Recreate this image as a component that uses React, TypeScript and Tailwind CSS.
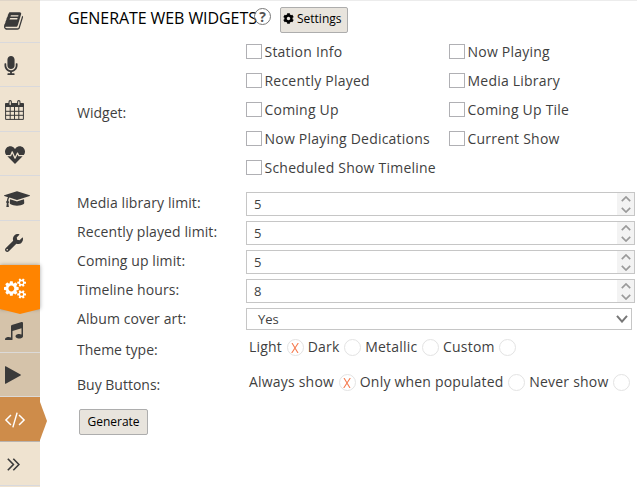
import React, { useState } from 'react';
import { FaMicrophone, FaHeartbeat, FaWrench, FaCog } from 'react-icons/fa';

interface IconProps {
  className?: string;
}

const BookIcon: React.FC<IconProps> = ({ className }) => (
  <svg viewBox="0 128 1664 1536" className={className} fill="currentColor">
    <path d="M1639 478q40 57 18 129l-275 906q-19 64-76.5 107.5t-122.5 43.5h-923q-77 0-148.5-53.5t-99.5-131.5q-24-67-2-127 0-4 3-27t4-37q1-8-3-21.5t-3-19.5q2-11 8-21t16.5-23.5 16.5-23.5q23-38 45-91.5t30-91.5q3-10 .5-30t-.5-28q3-11 17-28t17-23q21-36 42-92t25-90q1-9-2.5-32t.5-28q4-13 22-30.5t22-22.5q19-26 42.5-84.5t27.5-96.5q1-8-3-25.5t-2-26.5q2-8 9-18t18-23 17-21q8-12 16.5-30.5t15-35 16-36 19.5-32 26.5-23.5 36-11.5 47.5 5.5l-1 3q38-9 51-9h761q74 0 114 56t18 130l-274 906q-36 119-71.5 153.5t-128.5 34.5h-869q-27 0-38 15-11 16-1 43 24 70 144 70h923q29 0 56-15.5t35-41.5l300-987q7-22 5-57 38 15 59 43zm-1064 2q-4 13 2 22.5t20 9.5h608q13 0 25.5-9.5t16.5-22.5l21-64q4-13-2-22.5t-20-9.5h-608q-13 0-25.5 9.5t-16.5 22.5zm-83 256q-4 13 2 22.5t20 9.5h608q13 0 25.5-9.5t16.5-22.5l21-64q4-13-2-22.5t-20-9.5h-608q-13 0-25.5 9.5t-16.5 22.5z" />
  </svg>
);

const CalendarIcon: React.FC<IconProps> = ({ className }) => (
  <svg viewBox="0 0 19 20" className={className} fill="none" stroke="currentColor">
    <path d="M.5 3.5h18v3H.5z" fill="currentColor" />
    <path d="M.6 4v15.4h17.8V4M5.2 7v12.5M9.5 7v12.5M13.8 7v12.5M.5 11.3h18M.5 15.3h18" strokeWidth="1" />
    <path d="M5.2 1.8v2.8M13.8 1.8v2.8" stroke="#3a3a3a" strokeWidth="3.4" strokeLinecap="round" />
    <path d="M5.2 1.8v2.8M13.8 1.8v2.8" stroke="#efe3d0" strokeWidth="1.3" strokeLinecap="round" />
  </svg>
);

const CapIcon: React.FC<IconProps> = ({ className }) => (
  <svg viewBox="0 128 2304 1280" className={className} fill="currentColor">
    <path d="M1774 836l18 316q4 69-82 128t-235 93.5-323 34.5-323-34.5-235-93.5-82-128l18-316 574 181q22 7 48 7t48-7zm530-324q0 23-22 31l-1120 352q-4 1-10 1t-10-1l-652-206q-43 34-71 111.5t-34 178.5q63 36 63 109 0 69-58 107l58 433q2 14-8 25-9 11-24 11h-192q-15 0-24-11-10-11-8-25l58-433q-58-38-58-107 0-73 65-111 11-207 98-330l-333-104q-22-8-22-31t22-31l1120-352q4-1 10-1t10 1l1120 352q22 8 22 31z" />
  </svg>
);

const CogsIcon: React.FC<IconProps> = ({ className }) => (
  <svg viewBox="0 0 1920 1792" className={className} fill="currentColor">
    <path d="M896 896q0-106-75-181t-181-75-181 75-75 181 75 181 181 75 181-75 75-181zm768 512q0-52-38-90t-90-38-90 38-38 90q0 53 37.5 90.5t90.5 37.5 90.5-37.5 37.5-90.5zm0-1024q0-52-38-90t-90-38-90 38-38 90q0 53 37.5 90.5t90.5 37.5 90.5-37.5 37.5-90.5zm-384 421v185q0 10-7 19.5t-16 10.5l-155 24q-11 35-32 76 34 48 90 115 7 11 7 20 0 12-7 19-23 30-82.5 89.5t-78.5 59.5q-11 0-21-7l-115-90q-37 19-77 31-11 108-23 155-7 24-30 24h-186q-11 0-20-7.5t-10-17.5l-23-153q-34-10-75-31l-118 89q-7 7-20 7-11 0-21-8-144-133-144-160 0-9 7-19 10-14 41-53t47-61q-23-44-35-82l-152-24q-10-1-17-9.5t-7-19.5v-185q0-10 7-19.5t16-10.5l155-24q11-35 32-76-34-48-90-115-7-11-7-20 0-12 7-20 22-30 82-89t79-59q11 0 21 7l115 90q34-18 77-32 11-108 23-154 7-24 30-24h186q11 0 20 7.5t10 17.5l23 153q34 10 75 31l118-89q8-7 20-7 11 0 21 8 144 133 144 160 0 8-7 19-12 16-42 54t-45 60q23 48 34 82l152 23q10 2 17 10.5t7 19.5zm640 533v140q0 16-149 31-12 27-30 52 51 113 51 138 0 4-4 7-122 71-124 71-8 0-46-47t-52-68q-20 2-30 2t-30-2q-14 21-52 68t-46 47q-2 0-124-71-4-3-4-7 0-25 51-138-18-25-30-52-149-15-149-31v-140q0-16 149-31 13-29 30-52-51-113-51-138 0-4 4-7 4-2 35-20t59-34 30-16q8 0 46 46.5t52 67.5q20-2 30-2t30 2q51-71 92-112l6-2q4 0 124 70 4 3 4 7 0 25-51 138 17 23 30 52 149 15 149 31zm0-1024v140q0 16-149 31-12 27-30 52 51 113 51 138 0 4-4 7-122 71-124 71-8 0-46-47t-52-68q-20 2-30 2t-30-2q-14 21-52 68t-46 47q-2 0-124-71-4-3-4-7 0-25 51-138-18-25-30-52-149-15-149-31v-140q0-16 149-31 13-29 30-52-51-113-51-138 0-4 4-7 4-2 35-20t59-34 30-16q8 0 46 46.5t52 67.5q20-2 30-2t30 2q51-71 92-112l6-2q4 0 124 70 4 3 4 7 0 25-51 138 17 23 30 52 149 15 149 31z" />
  </svg>
);

const MusicIcon: React.FC<IconProps> = ({ className }) => (
  <svg viewBox="128 128 1536 1536" className={className} fill="currentColor">
    <path d="M1664 224v1120q0 50-34 89t-86 60.5-103.5 32-96.5 10.5-96.5-10.5-103.5-32-86-60.5-34-89 34-89 86-60.5 103.5-32 96.5-10.5q105 0 192 39v-537l-768 237v709q0 50-34 89t-86 60.5-103.5 32-96.5 10.5-96.5-10.5-103.5-32-86-60.5-34-89 34-89 86-60.5 103.5-32 96.5-10.5q105 0 192 39v-967q0-31 19-56.5t49-35.5l832-256q12-4 28-4 40 0 68 28t28 68z" />
  </svg>
);

const PlayIcon: React.FC<IconProps> = ({ className }) => (
  <svg viewBox="0 0 16 18" className={className} fill="currentColor">
    <path d="M0 .6Q0-.1.7.3L15.6 8.6q.6.4 0 .8L.7 17.7Q0 18.1 0 17.4z" />
  </svg>
);

const CodeIcon: React.FC<IconProps> = ({ className }) => (
  <svg viewBox="109 275 1830 1370" className={className} fill="currentColor">
    <path d="M681 1399l-50 50q-10 10-23 10t-23-10l-466-466q-10-10-10-23t10-23l466-466q10-10 23-10t23 10l50 50q10 10 10 23t-10 23l-393 393 393 393q10 10 10 23t-10 23zm591-1067l-373 1291q-4 13-15.5 19.5t-23.5 2.5l-62-17q-13-4-19.5-15.5t-2.5-24.5l373-1291q4-13 15.5-19.5t23.5-2.5l62 17q13 4 19.5 15.5t2.5 24.5zm657 651l-466 466q-10 10-23 10t-23-10l-50-50q-10-10-10-23t10-23l393-393-393-393q-10-10-10-23t10-23l50-50q10-10 23-10t23 10l466 466q10 10 10 23t-10 23z" />
  </svg>
);

const ExpandIcon: React.FC<IconProps> = ({ className }) => (
  <svg viewBox="0 0 13 13" className={className} fill="none" stroke="currentColor" strokeWidth="1.6">
    <path d="M.8.8l5.6 5.7-5.6 5.7M6.3.8l5.6 5.7-5.6 5.7" />
  </svg>
);

const Chevron: React.FC<{ className: string; up?: boolean }> = ({ className, up }) => (
  <svg viewBox="0 0 10 6" className={className} fill="none" stroke="currentColor" strokeWidth="1.7">
    <path d={up ? 'M.8 5.2L5 1l4.2 4.2' : 'M.8.8L5 5 9.2.8'} />
  </svg>
);

const Sidebar = () => (
  <nav className="flex w-10 shrink-0 flex-col bg-[#efe3d0] text-[#3a3a3a]">
    <div className="flex h-[43px] items-center border-t border-b border-t-[#dfd5c8] border-b-[#d9d9dc] pl-1">
      <BookIcon className="-mt-[2px] h-[18px] w-[19px]" />
    </div>
    <div className="flex h-11 items-center border-b border-[#d9d9dc] pl-[1px]">
      <FaMicrophone className="mt-[1px] h-[19px] w-5" />
    </div>
    <div className="flex h-[45px] items-center border-b border-[#d9d9dc] pl-[5px]">
      <CalendarIcon className="mt-[2px] h-5 w-[19px]" />
    </div>
    <div className="flex h-11 items-center border-b border-[#d9d9dc] pl-[5px]">
      <FaHeartbeat className="mt-[2px] h-5 w-5" />
    </div>
    <div className="flex h-[45px] items-center border-b border-[#d9d9dc] pl-1">
      <CapIcon className="h-[17px] w-[26px]" />
    </div>
    <div className="flex h-11 items-center pl-[5px]">
      <FaWrench className="h-[18px] w-[18px]" />
    </div>
    <div className="relative z-10 flex h-11 items-center bg-[#ff8400] pl-1 text-white shadow-[0_0_4px_rgba(0,0,0,0.35)]">
      <CogsIcon className="mt-[2px] h-[21px] w-[22px]" />
      <svg viewBox="0 0 40 5" className="absolute top-full left-0 h-[5px] w-10">
        <path d="M0 0h40L20 5z" fill="#ff8400" />
      </svg>
    </div>
    <div className="flex h-11 items-center border-b border-[#dcdad8] bg-[#d5c3aa] pl-[5px]">
      <MusicIcon className="h-[18px] w-[18px]" />
    </div>
    <div className="flex h-[44px] items-center border-b border-[#dcdad8] bg-[#d5c3aa] pl-[5px]">
      <PlayIcon className="h-[18px] w-4" />
    </div>
    <div className="relative flex h-[45px] items-center border-b border-[#b9b3ae] bg-[#ce8c4a] pl-[5px] text-white">
      <CodeIcon className="mt-[2px] h-4 w-5" />
      <svg viewBox="0 0 7 38" className="absolute top-[5px] left-full h-[38px] w-[7px]">
        <path d="M0 0l7 19-7 19z" fill="#ce8c4a" />
      </svg>
    </div>
    <div className="flex h-[44px] items-center border-b border-[#d9d9dc] pl-[7px]">
      <ExpandIcon className="mt-[2px] h-[13px] w-[13px]" />
    </div>
  </nav>
);

const WIDGETS = [
  'Station Info',
  'Now Playing',
  'Recently Played',
  'Media Library',
  'Coming Up',
  'Coming Up Tile',
  'Now Playing Dedications',
  'Current Show',
  'Scheduled Show Timeline',
];

const LIMITS = [
  { label: 'Media library limit:', value: '5' },
  { label: 'Recently played limit:', value: '5' },
  { label: 'Coming up limit:', value: '5' },
  { label: 'Timeline hours:', value: '8' },
];

interface RadioGroupProps {
  options: string[];
  value: string;
  onChange: (value: string) => void;
}

const RadioGroup: React.FC<RadioGroupProps> = ({ options, value, onChange }) => (
  <div className="flex h-5 items-center gap-[4px] pl-[3px] tracking-[0.2px] whitespace-nowrap">
    {options.map((option) => (
      <label key={option} className="flex h-5 cursor-pointer items-center gap-[4.7px]" onClick={() => onChange(option)}>
        <span>{option}</span>
        <span className="mt-[1px] flex h-[17px] w-[17px] items-center justify-center rounded-full border border-[#e3e3e3] text-[#f57c51]">
          {value === option && (
            <svg viewBox="0 0 8 10" className="h-[10px] w-2" fill="none" stroke="currentColor" strokeWidth="1.1">
              <path d="M1 0l6 10M7.3 0L.7 10" />
            </svg>
          )}
        </span>
      </label>
    ))}
  </div>
);

export default function App() {
  const [checked, setChecked] = useState<string[]>([]);
  const [theme, setTheme] = useState('Light');
  const [buy, setBuy] = useState('Always show');

  const toggle = (name: string) => {
    setChecked(checked.includes(name) ? checked.filter((n) => n !== name) : [...checked, name]);
  };

  return (
    <div className="flex h-[487px] w-[637px] overflow-hidden bg-white font-['Open_Sans',sans-serif] text-[14px] leading-5 text-[#3f3f3f]">
      <Sidebar />

      <main className="flex min-w-0 flex-1 flex-col border-t border-[#ececec]">
        {/* Title bar */}
        <header className="flex h-[35px] items-start pl-7 text-black">
          <h1 className="mt-[7px] w-[187px] text-[16px] leading-5 tracking-[-0.08px] whitespace-nowrap">GENERATE WEB WIDGETS</h1>
          <span className="mt-[7px] -ml-px flex h-[17px] w-[17px] items-center justify-center rounded-full border-[1.5px] border-[#777] text-[14px] leading-none font-bold text-[#555]">
            ?
          </span>
          <button className="mt-[6px] ml-[9px] flex h-[26px] w-[68px] items-center rounded-[2px] border border-[#adadad] bg-[#e8e4dd] pl-[2px] text-[12px]">
            <FaCog className="mr-[3px] -mt-[3px] h-[11px] w-[11px]" />
            <span className="-mt-[2px]">Settings</span>
          </button>
        </header>

        {/* Widget choice */}
        <section className="flex h-[145px] pl-[37px]">
          <div className="flex w-[169px] items-center pt-[8px]">Widget:</div>
          <div className="grid grid-cols-[203px_1fr] auto-rows-[29px] pt-[5px]">
            {WIDGETS.map((name) => (
              <label key={name} className="flex h-5 cursor-pointer items-center gap-[2.5px] whitespace-nowrap" onClick={() => toggle(name)}>
                <span className="flex h-[15px] w-4 items-center justify-center border border-[#b0b0b4]">
                  {checked.includes(name) && <span className="h-2 w-2 bg-[#f57c51]" />}
                </span>
                <span className="pt-[2px] tracking-[0.22px]">{name}</span>
              </label>
            ))}
          </div>
        </section>

        {/* Limits */}
        <section className="flex flex-col gap-[5px] pt-[11px] pl-[37px]">
          {LIMITS.map((limit) => (
            <div key={limit.label} className="flex h-6">
              <span className="w-[169px] pt-px tracking-[0.1px]">{limit.label}</span>
              <div className="flex h-6 w-[389px] border border-[#c6c6c6]">
                <span className="flex-1 pt-px pl-[7px] text-[13px] leading-5">{limit.value}</span>
                <span className="flex w-[17px] flex-col bg-[#f3f3f3] text-[#9a9a9a]">
                  <span className="flex h-[11px] items-center justify-center pt-px">
                    <Chevron up className="h-[6px] w-[10px]" />
                  </span>
                  <span className="flex h-[11px] items-center justify-center">
                    <Chevron className="h-[6px] w-[10px]" />
                  </span>
                </span>
              </div>
            </div>
          ))}
          <div className="flex h-[22px]">
            <span className="w-[169px] pt-px tracking-[0.1px]">Album cover art:</span>
            <div className="flex h-[22px] w-[386px] items-center justify-between border border-[#c6c6c6] pr-[3px] pl-[11px] text-[13px]">
              <span className="-mt-px">Yes</span>
              <svg viewBox="0 0 12 8" className="-mt-px h-2 w-3" fill="none" stroke="#777" strokeWidth="2">
                <path d="M1 .8l5 5.8L11 .8" />
              </svg>
            </div>
          </div>
        </section>

        {/* Theme and buy buttons */}
        <section className="flex flex-col gap-[15px] pt-[7px] pl-[37px]">
          <div className="flex h-5">
            <span className="w-[169px] pt-[3px]">Theme type:</span>
            <RadioGroup options={['Light', 'Dark', 'Metallic', 'Custom']} value={theme} onChange={setTheme} />
          </div>
          <div className="flex h-5">
            <span className="w-[169px] pt-[3px]">Buy Buttons:</span>
            <RadioGroup options={['Always show', 'Only when populated', 'Never show']} value={buy} onChange={setBuy} />
          </div>
        </section>

        <button className="mt-[17px] ml-[39px] h-[26px] w-[69px] rounded-[2px] border border-[#adadad] bg-[#e8e4dd] text-[12px] text-black">
          Generate
        </button>
      </main>
    </div>
  );
}
